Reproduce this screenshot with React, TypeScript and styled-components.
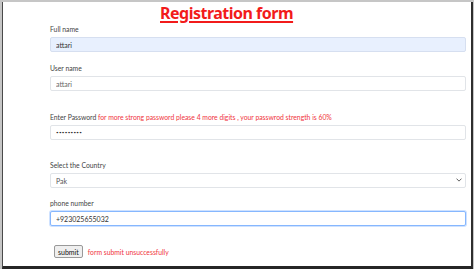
import styled, { createGlobalStyle } from "styled-components";

const GlobalStyle = createGlobalStyle`
  html, body {
    margin: 0;
    padding: 0;
    background: #c6c6c6;
  }
  * {
    box-sizing: border-box;
  }
`;

const Field = ({ label, hint, children, gap }: { label: string; hint?: string; children: React.ReactNode; gap?: number }) => (
  <Group $gap={gap}>
    <Label>
      {label}
      {hint && <Hint> {hint}</Hint>}
    </Label>
    {children}
  </Group>
);

const Chevron = () => (
  <svg width="6" height="4" viewBox="0 0 16 10">
    <path d="M2 2l6 6 6-6" fill="none" stroke="#555" strokeWidth="2.5" strokeLinecap="round" strokeLinejoin="round" />
  </svg>
);

const App = () => {
  return (
    <Screen>
      <GlobalStyle />
      <Window>
        <Title>Registration form</Title>
        <Form>
          <Field label="Full name" gap={11}>
            <Input $filled defaultValue="attari" />
          </Field>
          <Field label="User name" gap={21}>
            <Input $muted defaultValue="attari" />
          </Field>
          <Field
            label="Enter Password"
            hint="for more strong password please 4 more digits , your passwrod strength is 60%"
            gap={20}
          >
            <Input $secret type="password" defaultValue="attari123" />
          </Field>
          <Field label="Select the Country" gap={10}>
            <SelectWrap>
              <Select defaultValue="pak">
                <option value="pak">Pak</option>
                <option value="ind">India</option>
              </Select>
              <Arrow>
                <Chevron />
              </Arrow>
            </SelectWrap>
          </Field>
          <Field label="phone number" gap={19}>
            <Input $focused defaultValue="+923025655032" />
          </Field>
          <SubmitRow>
            <Submit type="button">submit</Submit>
            <Hint>form submit unsuccessfully</Hint>
          </SubmitRow>
        </Form>
      </Window>
    </Screen>
  );
};

const Screen = styled.div`
  width: 474px;
  height: 269px;
  padding: 2px 1px 0 2px;
  background: #c6c6c6;
  overflow: hidden;
`;

const Window = styled.div`
  height: 267px;
  background: #fff;
  border-left: 1px solid #4a4a4a;
  border-right: 2px solid #2e2e2e;
  border-bottom: 3px solid #262626;
  padding: 0 5px 0 47px;
  font-family: Lato, "Open Sans", sans-serif;
  color: #212529;
`;

const Title = styled.h1`
  margin: 0;
  padding-left: 110px;
  font-family: "Noto Sans", "Open Sans", sans-serif;
  font-size: 16px;
  font-weight: 700;
  letter-spacing: -0.5px;
  color: #f21b1b;
  text-decoration: underline;
  text-decoration-thickness: 1.5px;
  text-underline-offset: 2px;
  line-height: 22px;
  height: 22px;
`;

const Form = styled.form`
  display: flex;
  flex-direction: column;
`;

const Group = styled.div<{ $gap?: number }>`
  display: flex;
  flex-direction: column;
  gap: 2px;
  margin-bottom: ${(p) => p.$gap ?? 11}px;
`;

const Label = styled.label`
  font-size: 6.8px;
  line-height: 11px;
  height: 11px;
  color: #444;
  white-space: nowrap;
`;

const Hint = styled.span`
  color: #f0343d;
  font-size: 6.8px;
  white-space: nowrap;
`;

const Input = styled.input<{ $filled?: boolean; $focused?: boolean; $muted?: boolean; $secret?: boolean }>`
  width: 100%;
  height: 15px;
  padding: 0 5px;
  font-family: inherit;
  font-size: ${(p) => (p.$secret ? "4.5px" : "7px")};
  letter-spacing: ${(p) => (p.$secret ? "0.3px" : "0")};
  color: ${(p) => (p.$muted ? "#666" : "#333")};
  border-radius: 2px;
  outline: none;
  background: ${(p) => (p.$filled ? "#e8f0fe" : "#fff")};
  border: 1px solid ${(p) => (p.$focused ? "#86b7fe" : p.$filled ? "#d6dff0" : "#e1e4e8")};
  box-shadow: ${(p) => (p.$focused ? "0 0 0 1px rgba(13,110,253,0.2)" : "none")};
`;

const SelectWrap = styled.div`
  position: relative;
  display: flex;
`;

const Select = styled.select`
  width: 100%;
  height: 15px;
  padding: 0 5px;
  font-family: inherit;
  font-size: 7px;
  color: #555;
  background: #fff;
  border: 1px solid #e1e4e8;
  border-radius: 2px;
  outline: none;
  appearance: none;
`;

const Arrow = styled.span`
  position: absolute;
  right: 4px;
  top: 5px;
  display: flex;
  pointer-events: none;
`;

const SubmitRow = styled.div`
  display: flex;
  align-items: center;
  gap: 5px;
  padding-left: 4px;
`;

const Submit = styled.button`
  font-family: inherit;
  font-size: 7px;
  height: 13px;
  padding: 0 3px;
  color: #111;
  background: #efefef;
  border: 1px solid #999;
  border-radius: 2px;
`;

export default App;
